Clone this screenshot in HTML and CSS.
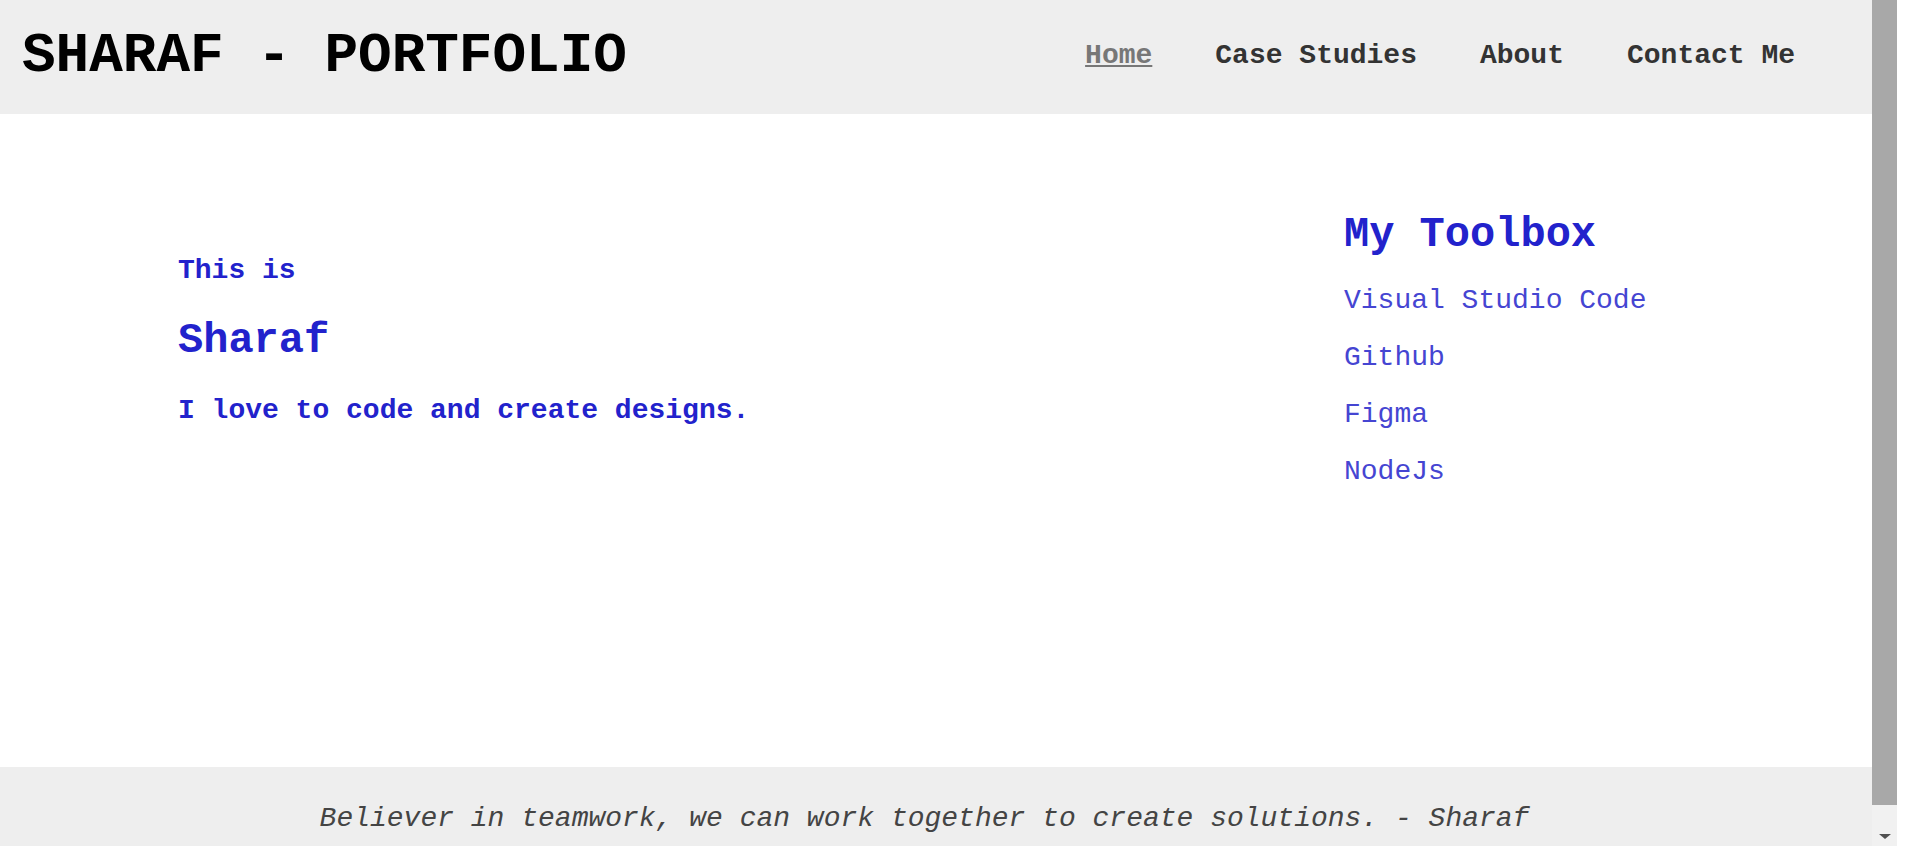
FILE: index.html
```html
<!DOCTYPE html>
<html lang="en">
<head>
<meta charset="utf-8">
<title>Sharaf - Portfolio</title>
<link rel="stylesheet" href="styles.css">
</head>
<body>
<div class="viewport">
  <div class="page">
    <header class="site-header">
      <h1 class="brand">SHARAF - PORTFOLIO</h1>
      <nav class="site-nav">
        <ul class="nav-list">
          <li><a class="nav-link is-active" href="#">Home</a></li>
          <li><a class="nav-link" href="#">Case Studies</a></li>
          <li><a class="nav-link" href="#">About</a></li>
          <li><a class="nav-link" href="#">Contact Me</a></li>
        </ul>
      </nav>
    </header>
    <main class="hero">
      <section class="intro">
        <h4 class="intro-line">This is</h4>
        <h2 class="intro-name">Sharaf</h2>
        <h4 class="intro-line">I love to code and create designs.</h4>
      </section>
      <aside class="toolbox">
        <h2 class="toolbox-title">My Toolbox</h2>
        <ul class="tool-list">
          <li class="tool-item">Visual Studio Code</li>
          <li class="tool-item">Github</li>
          <li class="tool-item">Figma</li>
          <li class="tool-item">NodeJs</li>
        </ul>
      </aside>
    </main>
    <footer class="site-footer">
      <p class="quote">Believer in teamwork, we can work together to create solutions. - Sharaf</p>
    </footer>
  </div>
  <div class="scrollbar">
    <div class="scroll-thumb"></div>
    <div class="scroll-track"><span class="scroll-arrow"></span></div>
  </div>
</div>
</body>
</html>
```
FILE: styles.css
```css
* {
  box-sizing: border-box;
}

html, body {
  margin: 0;
  padding: 0;
}

body {
  width: 1920px;
  height: 846px;
  overflow: hidden;
  background: #ffffff;
  font-family: "Liberation Mono", "Courier New", monospace;
  font-size: 28px;
}

.viewport {
  display: flex;
  height: 846px;
}

.page {
  width: 1872px;
  height: 846px;
  display: flex;
  flex-direction: column;
  background: #ffffff;
}

/* Header */
.site-header {
  height: 114px;
  flex: 0 0 114px;
  background: #eeeeee;
  display: flex;
  align-items: center;
  justify-content: space-between;
  padding: 0 77px 2px 22px;
}

.brand {
  margin: 0;
  font-size: 56px;
  line-height: 64px;
  font-weight: bold;
  color: #000000;
}

.nav-list {
  list-style: none;
  margin: 0;
  padding: 0;
  display: flex;
  gap: 63px;
}

.nav-link {
  font-size: 28px;
  line-height: 32px;
  font-weight: bold;
  color: #333333;
  text-decoration: none;
}

.nav-link.is-active {
  color: #777777;
  text-decoration: underline;
}

/* Main */
.hero {
  flex: 1 1 auto;
  display: flex;
  padding: 97px 0 0 178px;
  color: #2222cc;
}

.intro {
  flex: 0 0 1166px;
  display: flex;
  flex-direction: column;
  gap: 30px;
  padding-top: 44px;
}

.intro-line {
  margin: 0;
  font-size: 28px;
  line-height: 32px;
  font-weight: bold;
}

.intro-name {
  margin: 0;
  font-size: 42px;
  line-height: 48px;
  font-weight: bold;
}

.toolbox {
  flex: 1 1 auto;
  display: flex;
  flex-direction: column;
  gap: 26px;
}

.toolbox-title {
  margin: 0;
  font-size: 42px;
  line-height: 48px;
  font-weight: bold;
}

.tool-list {
  list-style: none;
  margin: 0;
  padding: 0;
  display: flex;
  flex-direction: column;
  gap: 25px;
}

.tool-item {
  font-size: 28px;
  line-height: 32px;
  font-weight: normal;
  color: #4545d2;
}

/* Footer */
.site-footer {
  flex: 0 0 79px;
  height: 79px;
  overflow: hidden;
  background: #eeeeee;
  padding: 36px 23px 0 0;
  text-align: center;
}

.quote {
  margin: 0;
  font-size: 28px;
  line-height: 32px;
  font-style: italic;
  font-weight: normal;
  color: #444444;
}

/* Scrollbar strip */
.scrollbar {
  width: 25px;
  flex: 0 0 25px;
  display: flex;
  flex-direction: column;
}

.scroll-thumb {
  height: 805px;
  flex: 0 0 805px;
  background: #a8a8a8;
}

.scroll-track {
  flex: 1 1 auto;
  background: #f1f1f1;
  display: flex;
  justify-content: center;
  padding-top: 29px;
}

.scroll-arrow {
  width: 0;
  height: 0;
  border-left: 6px solid transparent;
  border-right: 6px solid transparent;
  border-top: 5px solid #505050;
}
```
